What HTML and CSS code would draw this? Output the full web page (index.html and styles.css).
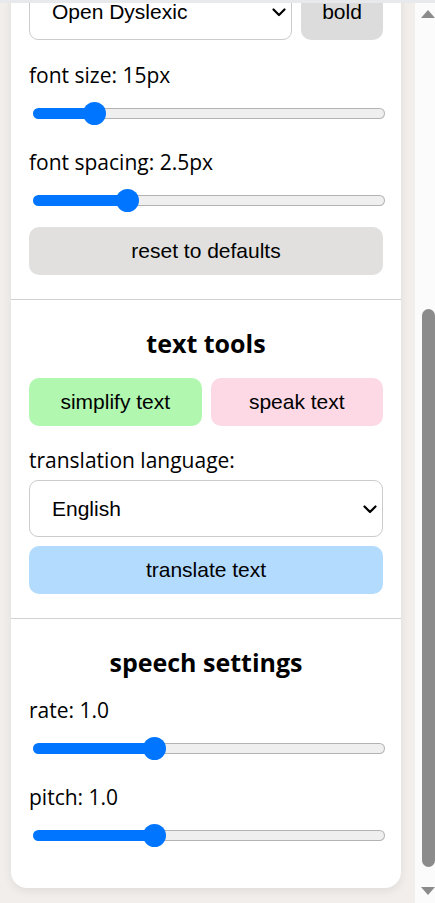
FILE: index.html
```html
<!DOCTYPE html>
<html lang="en">
<head>
<meta charset="utf-8">
<meta name="viewport" content="width=device-width,initial-scale=1">
<title>Reading Helper – Settings</title>
<link rel="stylesheet" href="styles.css">
</head>
<body>

<div class="topline"></div>

<div class="frame">
  <!-- scrolled popup view -->
  <div class="view">
    <main class="card">

      <!-- DISPLAY SETTINGS -->
      <section class="section">
        <div class="row">
          <div class="select-wrap">
            <select class="picker" id="font-family">
              <option>Open Dyslexic</option>
              <option>Arial</option>
              <option>Verdana</option>
            </select>
            <svg class="chev" width="14" height="9" viewBox="0 0 14 9"><path d="M1.5 1.5 7 7l5.5-5.5"/></svg>
          </div>
          <button class="btn btn-bold" id="btn-bold">bold</button>
        </div>

        <label class="label" for="font-size">font size: 15px</label>
        <input class="slider" type="range" id="font-size" min="12" max="32" value="15" style="--p:.15">

        <label class="label" for="font-spacing">font spacing: 2.5px</label>
        <input class="slider" type="range" id="font-spacing" min="0" max="10" step="0.5" value="2.5" style="--p:.25">

        <button class="btn btn-reset" id="btn-reset">reset to defaults</button>
      </section>

      <!-- TEXT TOOLS -->
      <section class="section">
        <h2>text tools</h2>
        <div class="row">
          <button class="btn btn-simplify" id="btn-simplify">simplify text</button>
          <button class="btn btn-speak" id="btn-speak">speak text</button>
        </div>

        <label class="label" for="lang">translation language:</label>
        <div class="select-wrap lang-wrap">
          <select class="picker" id="lang">
            <option>English</option>
            <option>Español</option>
            <option>Français</option>
          </select>
          <svg class="chev" width="14" height="9" viewBox="0 0 14 9"><path d="M1.5 1.5 7 7l5.5-5.5"/></svg>
        </div>
        <button class="btn btn-translate" id="btn-translate">translate text</button>
      </section>

      <!-- SPEECH SETTINGS -->
      <section class="section">
        <h2>speech settings</h2>

        <label class="label" for="rate">rate: 1.0</label>
        <input class="slider" type="range" id="rate" min="0.5" max="2" step="0.1" value="1" style="--p:.3333">

        <label class="label" for="pitch">pitch: 1.0</label>
        <input class="slider" type="range" id="pitch" min="0.5" max="2" step="0.1" value="1" style="--p:.3333">
      </section>

    </main>
  </div>

  <!-- scrollbar -->
  <div class="scrollbar">
    <span class="arrow up"></span>
    <span class="thumb"></span>
    <span class="arrow down"></span>
  </div>
</div>

</body>
</html>
```

FILE: styles.css
```css
:root{
  --page:#f1eeec;
  --blue:#0075ff;
  --line:#d2d2d2;
}
*{box-sizing:border-box;margin:0;padding:0}
body{
  font-family:"Open Sans","Noto Sans",Arial,sans-serif;color:#000;
  background:var(--page);height:903px;overflow:hidden;
  display:flex;flex-direction:column
}

/* ---------- FRAME ---------- */
.topline{height:3px;background:#e7e9ec;flex-shrink:0}
.frame{flex:1;display:flex;min-height:0}
.view{
  flex:1;overflow:hidden;display:flex;flex-direction:column;
  justify-content:flex-end
}

/* ---------- CARD ---------- */
.card{
  flex-shrink:0;background:#fff;border-radius:0 0 16px 16px;
  box-shadow:0 3px 10px rgba(0,0,0,.08);
  margin:0 14px 15px 11px
}
.section{padding:0 18px 24px}
.section+.section{border-top:1px solid var(--line);padding-top:27px}
.section:last-child{padding-bottom:41px}
h2{font-size:25px;font-weight:700;line-height:32px;text-align:center}

.row{display:flex;gap:9px}
h2+.row{margin-top:19px}

.label{display:block;font-size:21px;line-height:24px;margin-top:25px}
.row+.label{margin-top:23px}
.section:nth-child(2) .row+.label{margin-top:22px}
h2+.label{margin-top:20px}

/* ---------- CONTROLS ---------- */
.btn{
  font-family:"Liberation Sans",Arial,sans-serif;font-size:21px;color:#000;
  border:0;border-radius:10px;height:48px;cursor:pointer
}
.btn-bold{width:82px;height:57px;background:#dcdcdc}
.btn-reset{display:block;width:100%;margin-top:15px;background:#e1e0df}
.btn-simplify{flex:1;background:#b1f7b0}
.btn-speak{flex:1;background:#fcd9e4}
.btn-translate{display:block;width:100%;margin-top:9px;background:#b3dbfd}

.select-wrap{position:relative;flex:1}
.lang-wrap{margin-top:8px}
.picker{
  -webkit-appearance:none;appearance:none;display:block;width:100%;height:57px;
  font-family:"Liberation Sans",Arial,sans-serif;font-size:21px;color:#000;
  background:#fff;border:1px solid #cbcbcb;border-radius:9px;padding:0 28px 0 22px
}
.chev{
  position:absolute;right:6px;top:50%;margin-top:-4px;pointer-events:none;
  fill:none;stroke:#000;stroke-width:2.2;stroke-linecap:round;stroke-linejoin:round
}

/* ---------- SLIDERS ---------- */
.slider{
  -webkit-appearance:none;appearance:none;display:block;
  width:352px;height:24px;margin:14px 0 0 4px;background:transparent
}
.slider::-webkit-slider-runnable-track{
  height:11px;border:1px solid transparent;border-radius:6px;
  background:
    linear-gradient(var(--blue),var(--blue)) 0 0/calc(12.5px + (100% - 25px) * var(--p)) 100% no-repeat border-box,
    linear-gradient(#efefef,#efefef) padding-box,
    #b3b3b3 border-box
}
.slider::-webkit-slider-thumb{
  -webkit-appearance:none;width:23px;height:23px;border-radius:50%;
  background:var(--blue);margin-top:-7px;border:0
}

/* ---------- SCROLLBAR ---------- */
.scrollbar{
  width:20px;flex-shrink:0;background:#fbfbfb;
  display:flex;flex-direction:column;align-items:center;padding:7px 0 0 6px
}
.arrow{width:0;height:0;border-left:7px solid transparent;border-right:7px solid transparent}
.arrow.up{border-bottom:8px solid #8b8b8b}
.arrow.down{border-top:8px solid #8b8b8b;margin-top:20px}
.thumb{width:13px;height:558px;margin-top:291px;border-radius:7px;background:#8b8b8b}
```
